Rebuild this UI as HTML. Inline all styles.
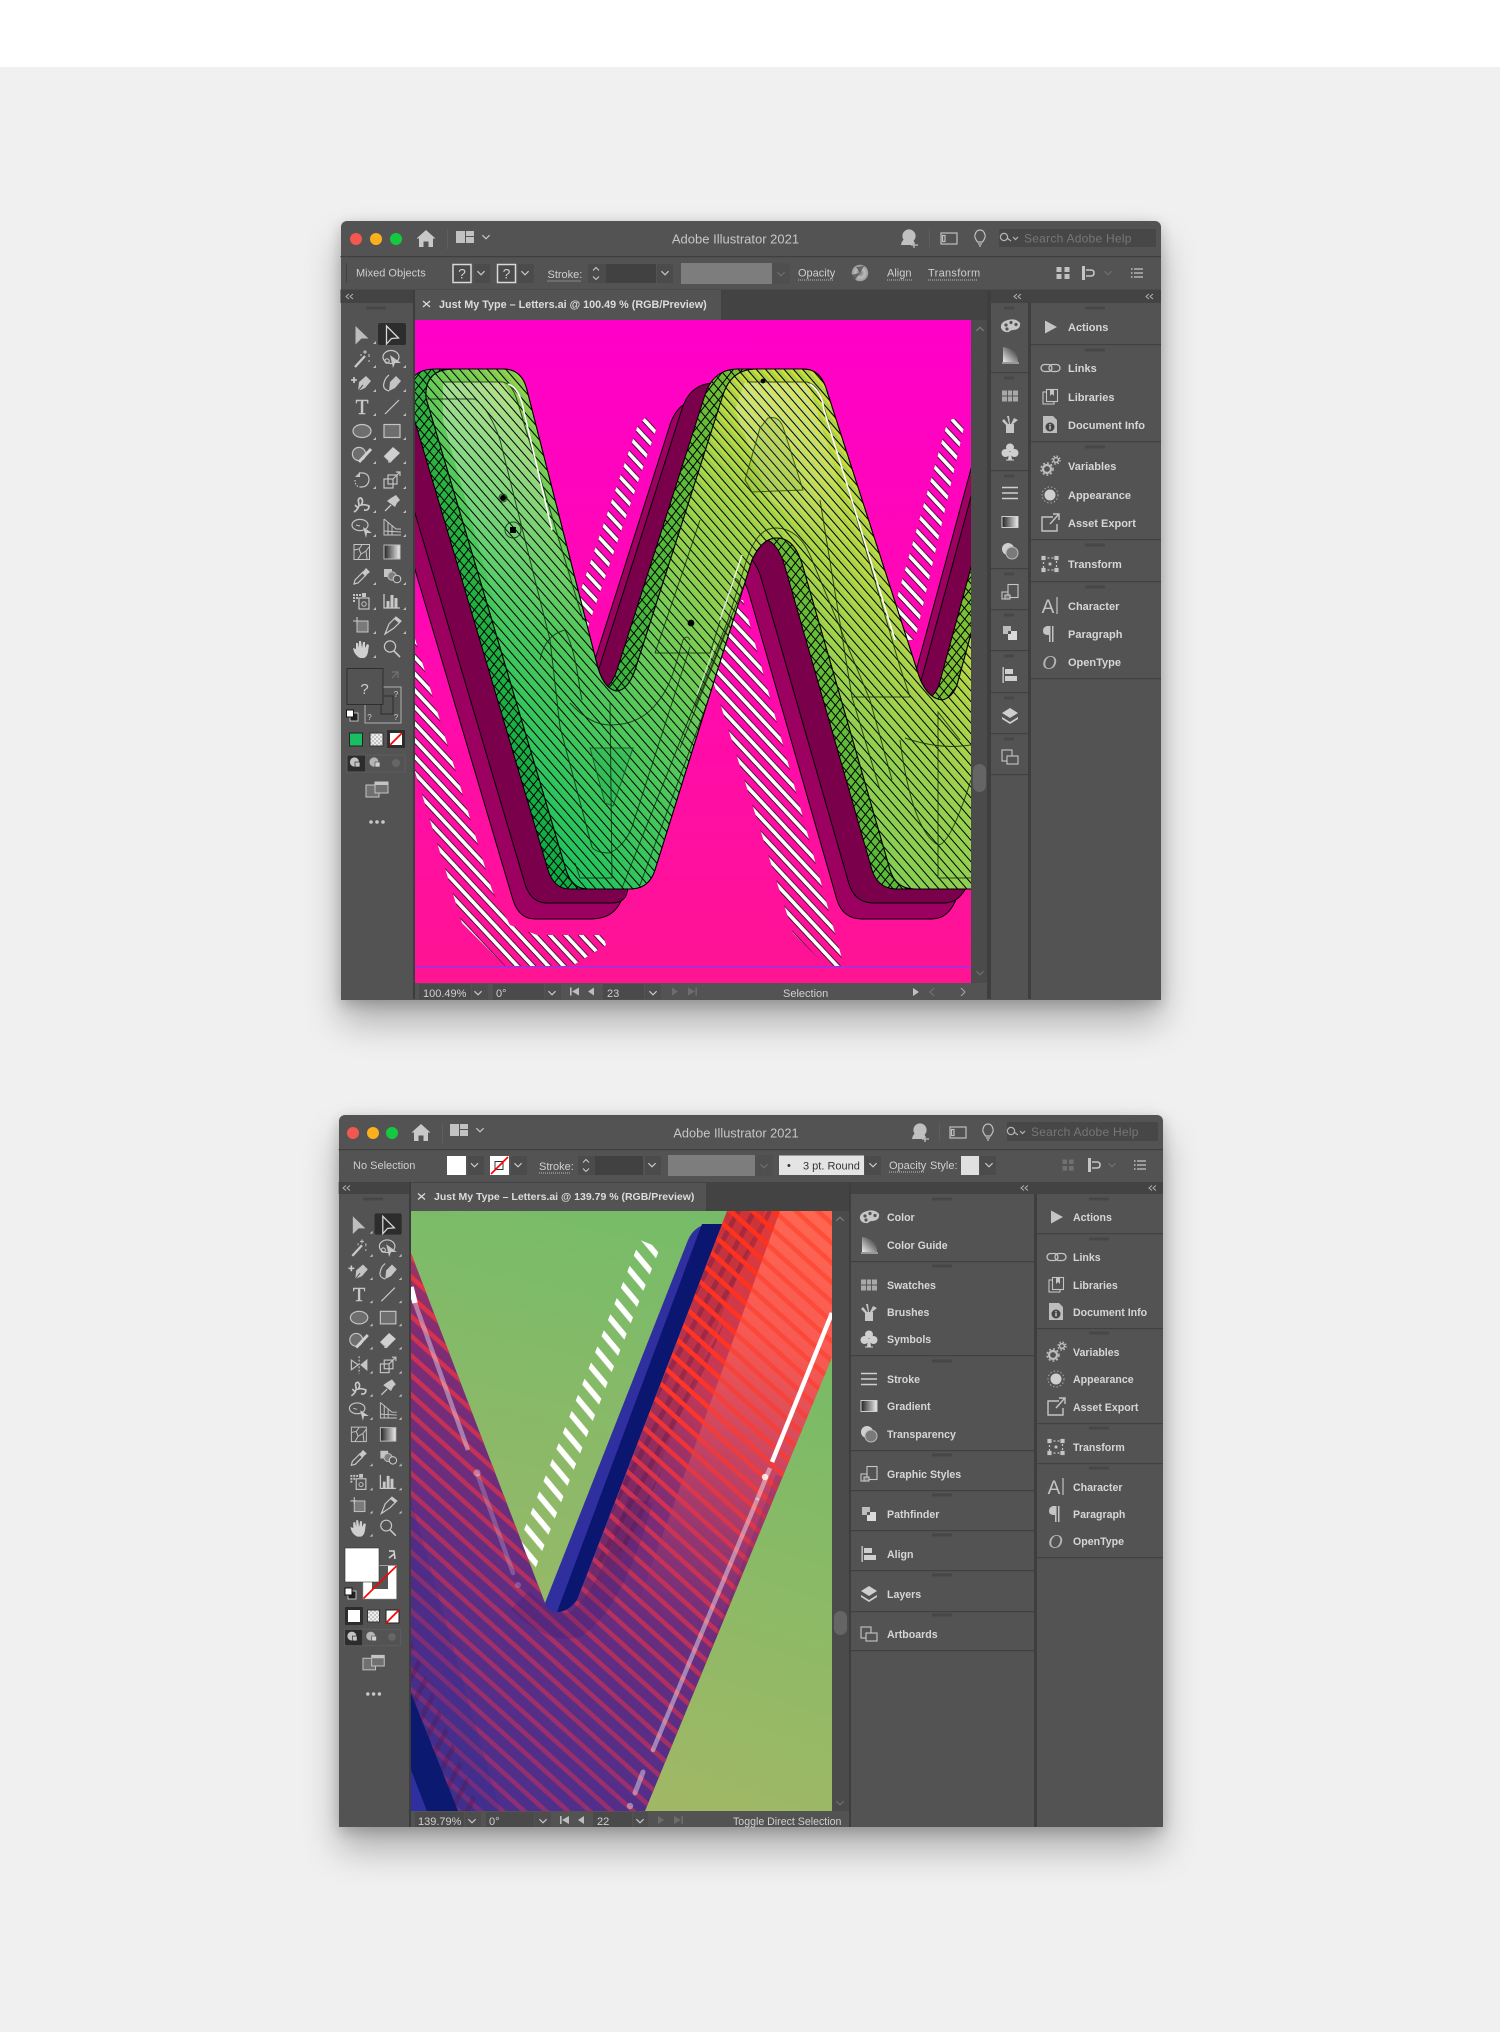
<!DOCTYPE html>
<html lang="en"><head><meta charset="utf-8"><title>Adobe Illustrator 2021</title>
<style>
html,body{margin:0;padding:0;background:#f0f0f0;width:1500px;height:2032px;overflow:hidden}
#top{position:absolute;left:0;top:0;width:1500px;height:67px;background:#fff}
.w{position:absolute;background:#535353;border-radius:6px 6px 0 0;box-shadow:0 22px 36px rgba(0,0,0,.28),0 4px 14px rgba(0,0,0,.2)}
svg{position:absolute;left:0;top:0;filter:blur(.3px)}
text{font-family:"Liberation Sans",sans-serif}
.p{font-size:11px;font-weight:700;fill:#d6d6d6}
.q{font-size:10.6px;font-weight:700;fill:#d6d6d6}
.c{font-size:11px;fill:#cfcfcf}
.tt{font-size:13px;fill:#c6c6c6}
.tb{font-size:10.8px;font-weight:700;fill:#dcdcdc}
.st{font-size:11px;fill:#d0d0d0}
.se{font-size:12px;fill:#767676}
</style></head><body>
<div id="top"></div>
<div class="w" style="left:340.5px;top:221px;width:820.5px;height:778.5px"></div>
<div class="w" style="left:338.7px;top:1115px;width:824.3px;height:711.7px"></div>
<svg width="1500" height="2032" viewBox="0 0 1500 2032" xmlns="http://www.w3.org/2000/svg">
<defs>
<linearGradient id="bg1" x1="0" y1="0" x2="0" y2="1"><stop offset="0" stop-color="#ff00c9"/><stop offset=".55" stop-color="#ff0aae"/><stop offset="1" stop-color="#ff1493"/></linearGradient>
<linearGradient id="lg" gradientUnits="userSpaceOnUse" x1="530" y1="820" x2="870" y2="560"><stop offset="0" stop-color="#1ec25f"/><stop offset=".35" stop-color="#52c85c"/><stop offset=".65" stop-color="#8ace52"/><stop offset="1" stop-color="#a8d24e"/></linearGradient>
<linearGradient id="cg" gradientUnits="userSpaceOnUse" x1="480" y1="800" x2="900" y2="560"><stop offset="0" stop-color="#02ab48"/><stop offset=".45" stop-color="#3fb63c"/><stop offset="1" stop-color="#7cc034"/></linearGradient>
<linearGradient id="hi" x1="0" y1="0" x2="0" y2="1"><stop offset="0" stop-color="#fff" stop-opacity=".38"/><stop offset="1" stop-color="#fff" stop-opacity="0"/></linearGradient>
<linearGradient id="gy" gradientUnits="userSpaceOnUse" x1="700" y1="620" x2="850" y2="420"><stop offset="0" stop-color="#fff" stop-opacity=".05"/><stop offset="1" stop-color="#fff" stop-opacity=".8"/></linearGradient>
<mask id="my" maskUnits="userSpaceOnUse" x="415" y="320" width="560" height="670"><rect x="415" y="320" width="560" height="670" fill="url(#gy)"/></mask>
<pattern id="h" patternUnits="userSpaceOnUse" width="20" height="7" patternTransform="rotate(49)"><rect width="20" height="1" fill="#000"/></pattern>
<pattern id="hc" patternUnits="userSpaceOnUse" width="20" height="7" patternTransform="rotate(-52)"><rect width="20" height="1" fill="#000"/></pattern>
<pattern id="hy" patternUnits="userSpaceOnUse" width="20" height="7" patternTransform="rotate(49)"><rect y="1.8" width="20" height="1.8" fill="#efe21e"/></pattern>
<pattern id="bar1" patternUnits="userSpaceOnUse" y="1.4" width="30" height="11.3" patternTransform="rotate(47)"><rect y="3.4" width="30" height="5.2" fill="#000"/><rect y="4.1" width="30" height="3.8" fill="#fff"/></pattern>
<pattern id="bar2" patternUnits="userSpaceOnUse" y="1.9" width="30" height="11.3" patternTransform="rotate(47)"><rect y="3.4" width="30" height="5.2" fill="#000"/><rect y="4.1" width="30" height="3.8" fill="#fff"/></pattern>
<pattern id="bar3" patternUnits="userSpaceOnUse" y="3.3" width="30" height="11.3" patternTransform="rotate(47)"><rect y="3.4" width="30" height="5.2" fill="#000"/><rect y="4.1" width="30" height="3.8" fill="#fff"/></pattern>
<pattern id="bar4" patternUnits="userSpaceOnUse" y="-4.7" width="30" height="11.3" patternTransform="rotate(47)"><rect y="3.4" width="30" height="5.2" fill="#000"/><rect y="4.1" width="30" height="3.8" fill="#fff"/></pattern>
<linearGradient id="bg2" gradientUnits="userSpaceOnUse" x1="700" y1="1211" x2="560" y2="1811"><stop offset="0" stop-color="#76bc68"/><stop offset=".45" stop-color="#8cb968"/><stop offset="1" stop-color="#a2b866"/></linearGradient>
<linearGradient id="bg2b" gradientUnits="userSpaceOnUse" x1="832" y1="1400" x2="690" y2="1811"><stop offset="0" stop-color="#7bbb66"/><stop offset="1" stop-color="#a0b866"/></linearGradient>
<linearGradient id="m2" gradientUnits="userSpaceOnUse" x1="832" y1="1211" x2="411" y2="1811"><stop offset="0" stop-color="#e83a30"/><stop offset=".3" stop-color="#c23858"/><stop offset=".46" stop-color="#7e2d74"/><stop offset=".7" stop-color="#5c2d84"/><stop offset="1" stop-color="#45308f"/></linearGradient>
<linearGradient id="s2" gradientUnits="userSpaceOnUse" x1="832" y1="1211" x2="411" y2="1811"><stop offset="0" stop-color="#ff3018"/><stop offset=".33" stop-color="#ff3528"/><stop offset=".46" stop-color="#d23250"/><stop offset=".7" stop-color="#a83064"/><stop offset="1" stop-color="#842e7a"/></linearGradient>
<linearGradient id="sal" gradientUnits="userSpaceOnUse" x1="830" y1="1230" x2="660" y2="1620"><stop offset="0" stop-color="#ff6652"/><stop offset=".3" stop-color="#f85a52" stop-opacity=".95"/><stop offset=".6" stop-color="#d04a64" stop-opacity=".5"/><stop offset="1" stop-color="#a04070" stop-opacity="0"/></linearGradient>
<pattern id="sw" patternUnits="userSpaceOnUse" width="30" height="14.6" patternTransform="rotate(42)"><rect y="0" width="30" height="4.6" fill="#fff"/></pattern>
<pattern id="sd" patternUnits="userSpaceOnUse" width="30" height="14" patternTransform="rotate(-62)"><rect width="30" height="5" fill="#5a1240" fill-opacity=".3"/></pattern>
<pattern id="wb" patternUnits="userSpaceOnUse" y="8" width="30" height="15.3" patternTransform="rotate(50)"><rect y="2" width="30" height="5.6" fill="#fff"/></pattern>
<mask id="ms" maskUnits="userSpaceOnUse" x="411" y="1211" width="421" height="600"><rect x="411" y="1211" width="421" height="600" fill="url(#sw)"/></mask>
<linearGradient id="gb" x1="0" y1="0" x2="1" y2="0"><stop offset="0" stop-color="#222"/><stop offset="1" stop-color="#eee"/></linearGradient>
<linearGradient id="gc" x1="0" y1="1" x2="1" y2="0"><stop offset="0" stop-color="#eee"/><stop offset="1" stop-color="#222"/></linearGradient>
<radialGradient id="glb"><stop offset="0" stop-color="#777"/><stop offset=".55" stop-color="#bbb"/><stop offset="1" stop-color="#999"/></radialGradient>
<pattern id="chk" patternUnits="userSpaceOnUse" width="4" height="4"><rect width="4" height="4" fill="#eee"/><rect width="2" height="2" fill="#c4c4c4"/><rect x="2" y="2" width="2" height="2" fill="#c4c4c4"/></pattern>
<path id="L" d="M426 398Q424 369 454 369L503 369Q522 369 527 390L598 668Q605 690 617 691Q628 690 635 670L722 398Q730 369 756 369L803 369Q820 369 826 388L917 670Q925 698 942 700Q952 698 957 685L1043 369L1200 369L1010 867Q1002 889 985 889L915 889Q896 889 890 870L803 567Q795 538 777 538Q762 538 752 560L655 870Q649 889 630 889L588 889Q572 889 566 870Z"/>
<clipPath id="c1"><rect x="415" y="320" width="556" height="663"/></clipPath>
<clipPath id="cl"><use href="#L"/></clipPath>
<clipPath id="c2"><rect x="411" y="1211" width="421" height="600"/></clipPath>
<clipPath id="cm"><path id="M2" d="M411 1253L545 1603L577 1600L727 1211L832 1211L832 1357L645 1811L411 1811Z"/></clipPath>
<g id="chev"><path d="M-3.600-1.800L0 1.800L3.600-1.800" fill="none" stroke="#c8c8c8" stroke-width="1.200"/></g>
<g id="chevd"><path d="M-3.600-1.800L0 1.800L3.600-1.800" fill="none" stroke="#6e6e6e" stroke-width="1.200"/></g>
<g id="chevu"><path d="M-3.600 1.800L0-1.800L3.600 1.800" fill="none" stroke="#7e7e7e" stroke-width="1.200"/></g>
<path id="tri" d="M0 0L3 0L3-3Z" fill="#bdbdbd"/>
<g id="grip"><rect x="-10" y="-1.500" width="20" height="3" fill="#474747"/></g>
<g id="home"><path d="M0-9L9.500-.5L7-.5L7 8L2.500 8L2.500 2.500L-2.500 2.500L-2.500 8L-7 8L-7-.5L-9.500-.5Z" fill="#c8c8c8"/></g>
<g id="wsp"><rect x="-9" y="-6" width="9" height="12" fill="#c2c2c2"/><rect x="1" y="-6" width="8" height="5" fill="#c2c2c2"/><rect x="1" y="0" width="8" height="6" fill="#c2c2c2"/></g>
<g id="user" fill="#c0c0c0"><circle cx="0" cy="-2" r="6.600"/><path d="M-8 7Q-7 1-3 1L3 1Q5 1 5 5L3 7Z"/><path d="M5 4L5 10M2 7L9 7" stroke="#c0c0c0" stroke-width="1.300" fill="none"/></g>
<g id="pane" fill="none" stroke="#c0c0c0" stroke-width="1.200"><rect x="-8" y="-6" width="16" height="11"/><rect x="-6.500" y="-3.500" width="2.500" height="6"/></g>
<g id="bulb" fill="none" stroke="#c0c0c0" stroke-width="1.200"><path d="M-2.500 4Q-6-1-5-3Q-4-8 0-8Q4-8 5-3Q6-1 2.500 4Z"/><path d="M-2 6L2 6M-1 8L1 8"/></g>
<g id="srch" fill="none" stroke="#b5b5b5" stroke-width="1.200"><circle cx="-2" cy="-1" r="3.600"/><path d="M1 0L5 3M7-1L9.500 1.500L12-1"/></g>
<g id="grid" fill="#c0c0c0"><rect x="-6.500" y="-6" width="5" height="5"/><rect x="1.500" y="-6" width="5" height="5"/><rect x="-6.500" y="1" width="5" height="5"/><rect x="1.500" y="1" width="5" height="5"/></g>
<g id="gridd" fill="#717171"><rect x="-5.500" y="-5.500" width="4.600" height="4.600"/><rect x="1" y="-5.500" width="4.600" height="4.600"/><rect x="-5.500" y="1" width="4.600" height="4.600"/><rect x="1" y="1" width="4.600" height="4.600"/></g>
<g id="alignr" fill="none" stroke="#c4c4c4" stroke-width="1.600"><rect x="-7" y="-7" width="3" height="14" fill="#c4c4c4" stroke="none"/><path d="M-3-3L2-3Q5-3 5 0Q5 3 2 3L-3 3"/></g>
<g id="menu" fill="none" stroke="#c4c4c4" stroke-width="1.300"><path d="M-3-4L6-4M-3 0L6 0M-3 4L6 4"/><path d="M-6-4L-4.500-4M-6 0L-4.500 0M-6 4L-4.500 4" stroke-width="1.600"/></g>
<g id="step" fill="none" stroke="#c8c8c8" stroke-width="1.100"><path d="M-3-3L0-6L3-3M-3 3L0 6L3 3"/></g>
<g id="ff" fill="#bdbdbd"><rect x="-5" y="-4" width="1.600" height="8"/><path d="M4-4L4 4L-3 0Z"/></g>
<g id="pv" fill="#bdbdbd"><path d="M3-4L3 4L-3 0Z"/></g>
<g id="nx" fill="#6d6d6d"><path d="M-3-4L-3 4L3 0Z"/></g>
<g id="ll" fill="#6d6d6d"><rect x="3.400" y="-4" width="1.600" height="8"/><path d="M-4-4L-4 4L3 0Z"/></g>
<g id="dbl" fill="none" stroke="#b0b0b0" stroke-width="1"><path d="M-1-2.500L-4 0L-1 2.500M3-2.500L0 0L3 2.500"/></g>
<g id="t1"><path d="M-6.500-9L6.500 3.500L-.5 3.500L-6.500 9.500Z" fill="#bdbdbd"/></g>
<g id="t2"><path d="M-5.500-9L6.500 3L-.5 3.500L-5.500 9Z" fill="none" stroke="#d8d8d8" stroke-width="1.300"/></g>
<g id="t3" fill="none" stroke="#c8c8c8"><path d="M-7 8L3-3" stroke-width="2.400"/><path d="M3-9L3-5M1-7L5-7M7-5L7-2M-1-5L-1-3M7 1L7 3" stroke-width="1"/></g>
<g id="t4"><ellipse cx="-1" cy="-2" rx="8" ry="6.500" fill="none" stroke="#c8c8c8" stroke-width="1.200"/><circle cx="-5" cy="2" r="2.200" fill="none" stroke="#c8c8c8" stroke-width="1.100"/><path d="M-2-4L9 4L3 4L1 9Z" fill="#c4c4c4"/></g>
<g id="t5"><path d="M-4 8L-3-1L4-7L9-2L3 5Z" fill="#c4c4c4"/><path d="M-11-3L-5-3M-8-6L-8 0" stroke="#d0d0d0" stroke-width="1.600"/><path d="M-4 8L1 2" stroke="#535353"/></g>
<g id="t6"><path d="M-3 8L-2-1L4-7L9-2L3 5Z" fill="#c4c4c4"/><path d="M-3 8Q-10 6-8 0Q-7-5-3-8" fill="none" stroke="#c8c8c8" stroke-width="1.200"/></g>
<g id="t7"><text x="0" y="7" text-anchor="middle" font-size="21" fill="#c8c8c8" stroke="#c8c8c8" stroke-width=".4" style="font-family:'Liberation Serif',serif">T</text></g>
<g id="t8"><path d="M-7 7L7-7" stroke="#c8c8c8" stroke-width="1.200"/></g>
<g id="t9"><ellipse rx="9" ry="6.500" fill="#6e6e6e" stroke="#c4c4c4" stroke-width="1.200"/></g>
<g id="t10"><rect x="-8" y="-6.500" width="16" height="13" fill="#6e6e6e" stroke="#c4c4c4" stroke-width="1.200"/></g>
<g id="t11"><circle cx="-3" cy="-1" r="6.600" fill="#6e6e6e" stroke="#c4c4c4" stroke-width="1.200"/><path d="M-3 7L9-6" stroke="#d0d0d0" stroke-width="3"/></g>
<g id="t12"><path d="M-8 1L1-8L8-2L-1 7Z" fill="#d0d0d0"/><path d="M-8 1L-3 6L-1 7L-4 7" fill="none" stroke="#c8c8c8"/></g>
<g id="t13" fill="none" stroke="#c4c4c4" stroke-width="1.200"><path d="M-3-7Q7-8 7 0Q6 7-1 7"/><path d="M-1 7Q-7 7-7 0" stroke-dasharray="1.500 1.500"/><path d="M-7-3L-2-8L-2-3Z" fill="#c4c4c4" stroke="none"/></g>
<g id="t14" fill="none" stroke="#c4c4c4" stroke-width="1.200"><rect x="-8" y="-1" width="9" height="9"/><rect x="-4" y="-5" width="9" height="9"/><path d="M1-1L8-8M4-8L8-8L8-4"/></g>
<g id="t15" fill="none" stroke="#c8c8c8" stroke-width="1.700"><path d="M-8 8Q-3 5-3 0Q-5-6-1-6Q2-3-1 1Q3 0 7 2Q7 7 2 6M-7 1L-4 4"/></g>
<g id="t16"><path d="M-1-6L4-9L8-4L5-1L3 3L-5-3Z" fill="#c8c8c8"/><path d="M-1 1L-7 7" stroke="#c8c8c8" stroke-width="1.300"/></g>
<g id="t17"><ellipse cx="-2" cy="-3" rx="8" ry="5.600" fill="none" stroke="#c4c4c4" stroke-width="1.200"/><path d="M1-1L10 5L5 5L4 10Z" fill="#c8c8c8"/><path d="M-6-3L-2-2" stroke="#c4c4c4"/></g>
<g id="t18" fill="none" stroke="#c4c4c4" stroke-width="1"><path d="M-8-9L-8 7L9 7M-8-9L4 1L9 1M-8 3L9 4M-4-6L-4 7M0-3L0 7"/></g>
<g id="t19" fill="none" stroke="#c4c4c4" stroke-width="1"><rect x="-8" y="-7.500" width="15.500" height="15"/><path d="M-8-2L-3-3L0-7M-3-3L-1 2L4-1L7-5M-1 2L-4 7M4-1L5 7"/></g>
<g id="t20"><rect x="-8" y="-7" width="16" height="14" fill="url(#gb)" stroke="#bbb"/></g>
<g id="t21"><path d="M-8 8L-7 4L1-4L4-1L-4 7Z" fill="none" stroke="#c8c8c8" stroke-width="1.200"/><path d="M0-3L4-8L8-4L3 0Z" fill="#c8c8c8"/></g>
<g id="t22"><rect x="-8" y="-7" width="8" height="8" fill="#c4c4c4"/><circle cx="0" cy="0" r="4.200" fill="#7e7e7e" stroke="#bbb"/><circle cx="5" cy="3" r="3.800" fill="#535353" stroke="#d0d0d0"/></g>
<g id="t23" fill="#c4c4c4"><rect x="-9" y="-7" width="2" height="2"/><rect x="-6" y="-7" width="2" height="2"/><rect x="-3" y="-7" width="2" height="2"/><rect x="-9" y="-4" width="2" height="2"/><rect x="-6" y="-4" width="2" height="2"/><rect x="-9" y="-1" width="2" height="2"/><rect x="0" y="-8" width="4" height="4"/><rect x="-3" y="-3" width="10" height="11" fill="none" stroke="#c4c4c4" stroke-width="1.200"/><circle cx="2" cy="3" r="2.200" fill="none" stroke="#c4c4c4"/></g>
<g id="t24" fill="none" stroke="#c8c8c8" stroke-width="1.300"><path d="M-8-7L-8 7L8 7"/><path d="M-4 7L-4 0M0 7L0-6M4 7L4-3" stroke-width="3"/></g>
<g id="t25"><rect x="-5" y="-4" width="11" height="11" fill="#7a7a7a" stroke="#c4c4c4"/><path d="M-9-4L-2-4M-5-8L-5-1" stroke="#c8c8c8" stroke-width="1.100"/></g>
<g id="t26"><path d="M-7 9L-3-1L4-8L9-4L2 3Z" fill="none" stroke="#c8c8c8" stroke-width="1.200"/><path d="M2-6L7-2L9-4L4-8Z" fill="#c8c8c8"/></g>
<g id="t27"><path d="M-2 9Q-8 6-9-1L-6 0L-6-6L-4-6L-3-1L-3-8L-1-8L0-1L1-7L3-7L3-1L5-5L7-4L6 3Q5 8 2 9Z" fill="#cfcfcf"/></g>
<g id="t28" fill="none" stroke="#c8c8c8" stroke-width="1.200"><circle cx="-2" cy="-2.500" r="5.600"/><path d="M2 2L8 8" stroke-width="1.600"/></g>
<g id="t29" fill="none" stroke="#c4c4c4" stroke-width="1.200"><path d="M-8-5L-8 5L-1 0Z"/><path d="M0-9L0 9" stroke-dasharray="2 1.500"/><path d="M8-5L8 5L2 0Z" fill="#c4c4c4"/></g>
<g id="ti"><use href="#t1" x="362" y="335"/><rect x="378" y="323" width="28" height="22" rx="2" fill="#2d2d2d"/><use href="#t2" x="392" y="335"/>
<use href="#t3" x="362" y="359"/><use href="#t4" x="392" y="359"/><use href="#t5" x="362" y="383"/><use href="#t6" x="392" y="383"/><use href="#t7" x="362" y="407"/><use href="#t8" x="392" y="407"/><use href="#t9" x="362" y="431"/><use href="#t10" x="392" y="431"/><use href="#t11" x="362" y="455"/><use href="#t12" x="392" y="455"/><use href="#t14" x="392" y="480"/><use href="#t15" x="362" y="504"/><use href="#t16" x="392" y="504"/><use href="#t17" x="362" y="528"/><use href="#t18" x="392" y="528"/><use href="#t19" x="362" y="552"/><use href="#t20" x="392" y="552"/><use href="#t21" x="362" y="576"/><use href="#t22" x="392" y="576"/><use href="#t23" x="362" y="601"/><use href="#t24" x="392" y="601"/><use href="#t25" x="362" y="625"/><use href="#t26" x="392" y="625"/><use href="#t27" x="362" y="649"/><use href="#t28" x="392" y="649"/>
<use href="#tri" x="373" y="344"/><use href="#tri" x="373" y="368"/><use href="#tri" x="403" y="368"/><use href="#tri" x="373" y="392"/><use href="#tri" x="403" y="392"/><use href="#tri" x="373" y="416"/><use href="#tri" x="403" y="416"/><use href="#tri" x="373" y="440"/><use href="#tri" x="403" y="440"/><use href="#tri" x="373" y="464"/><use href="#tri" x="403" y="464"/><use href="#tri" x="373" y="489"/><use href="#tri" x="403" y="489"/><use href="#tri" x="373" y="513"/><use href="#tri" x="403" y="513"/><use href="#tri" x="373" y="537"/><use href="#tri" x="403" y="537"/><use href="#tri" x="373" y="585"/><use href="#tri" x="403" y="585"/><use href="#tri" x="373" y="610"/><use href="#tri" x="403" y="610"/><use href="#tri" x="373" y="634"/><use href="#tri" x="403" y="634"/><use href="#tri" x="373" y="658"/></g>
<g id="modes"><rect x="347" y="755" width="18" height="17" fill="#2d2d2d"/><rect x="347" y="755" width="58" height="17" fill="none" stroke="#5e5e5e"/><circle cx="354.500" cy="762" r="4.600" fill="#c4c4c4"/><rect x="355" y="762" width="5" height="5" fill="#c4c4c4" stroke="#2d2d2d" stroke-width=".7"/><circle cx="374" cy="762" r="4.600" fill="#b5b5b5"/><rect x="375" y="762" width="5" height="5" fill="#d0d0d0" stroke="#535353" stroke-width=".7"/><circle cx="396" cy="763" r="4" fill="#666"/>
<g fill="#707070" stroke="#c4c4c4"><rect x="366" y="785" width="13" height="12"/><rect x="375" y="782" width="13" height="11"/></g><rect x="375" y="782" width="13" height="3" fill="#c4c4c4"/>
<circle cx="371" cy="822" r="1.800" fill="#c8c8c8"/><circle cx="377" cy="822" r="1.800" fill="#c8c8c8"/><circle cx="383" cy="822" r="1.800" fill="#c8c8c8"/></g>
<g id="pal" fill="#c6c6c6"><path d="M-9 2Q-10-4-2-6Q6-8 10-3Q11 3 4 4Q0 4-1 6Q-7 7-9 2Z"/><circle cx="-4" cy="-1" r="1.600" fill="#535353"/><circle cx="1" cy="-3.500" r="1.600" fill="#535353"/><circle cx="6" cy="-1.500" r="1.600" fill="#535353"/><circle cx="-3" cy="3" r="1.600" fill="#535353"/></g>
<g id="cgd"><path d="M-7-8L-7 7L8 7Q8-6-7-8Z" fill="url(#gc)"/><path d="M-8 8L9 8" stroke="#ddd"/></g>
<g id="swt" fill="#a8a8a8"><rect x="-8" y="-5.500" width="16" height="11"/><path d="M-8 0L8 0M-2.500-5.500L-2.500 5.500M2.500-5.500L2.500 5.500" stroke="#535353" stroke-width=".9"/></g>
<g id="brs" fill="#c6c6c6"><rect x="-4" y="0" width="8" height="9"/><path d="M-1 0L-3-8L-1-8L0 0M1 0L4-6L8-4L3 0M-2 0L-6-5L-8-3L-4 1"/></g>
<g id="clb" fill="#cfcfcf"><circle cy="-4.500" r="4"/><circle cx="-4.500" cy="1" r="4"/><circle cx="4.500" cy="1" r="4"/><path d="M-1 0L1 0L2 8L-2 8Z"/><path d="M-4 8L4 8" stroke="#cfcfcf" stroke-width="1"/></g>
<g id="stk" stroke="#cfcfcf" stroke-width="1.400"><path d="M-8-5.500L8-5.500M-8 0L8 0M-8 5.500L8 5.500"/></g>
<g id="grd"><rect x="-8" y="-5.500" width="16" height="11" fill="url(#gb)" stroke="#cfcfcf"/></g>
<g id="trn"><circle cx="-2" cy="-2" r="6" fill="#cfcfcf"/><circle cx="2" cy="2" r="6" fill="#7a7a7a" stroke="#bbb"/></g>
<g id="gst" fill="none" stroke="#c6c6c6" stroke-width="1.100"><rect x="-2" y="-7.500" width="10" height="13"/><rect x="-8" y="0" width="6" height="7" fill="#535353"/><rect x="-5" y="3" width="5" height="4" fill="#777"/></g>
<g id="pth"><rect x="-7" y="-7" width="8" height="8" fill="#bcbcbc"/><rect x="-2" y="-2" width="9" height="9" fill="#dadada"/><rect x="-2" y="-2" width="3" height="3" fill="#535353"/></g>
<g id="alg" fill="#cfcfcf"><rect x="-7.500" y="-8" width="1.300" height="16"/><rect x="-5" y="-6" width="8" height="5"/><rect x="-5" y="1" width="12" height="5"/></g>
<g id="lyr" fill="#cfcfcf"><path d="M0-8L8-3L0 2L-8-3Z"/><path d="M-8 1L0 6L8 1L8 3L0 8L-8 3Z"/></g>
<g id="abd" fill="none" stroke="#c6c6c6" stroke-width="1.100"><rect x="-8" y="-7" width="10" height="11"/><rect x="-3" y="-1" width="11" height="8" fill="#535353"/></g>
<g id="act"><path d="M-6-6.500L6 0L-6 6.500Z" fill="#c4c4c4"/></g>
<g id="lnk" fill="none" stroke="#c4c4c4" stroke-width="1.300"><rect x="-9" y="-3.500" width="11" height="7" rx="3.500"/><rect x="-1" y="-3.500" width="11" height="7" rx="3.500"/></g>
<g id="lib" fill="none" stroke="#c4c4c4" stroke-width="1.100"><rect x="-7" y="-5" width="11" height="12"/><rect x="-3.500" y="-7.500" width="11" height="12" fill="#535353"/><path d="M0-7L0-1L2-3L4-1L4-7Z" fill="#c4c4c4" stroke="none"/></g>
<g id="doc"><path d="M-7-9L3-9L7-5L7 8L-7 8Z" fill="#bcbcbc"/><circle cy="2" r="4.500" fill="#444"/><rect x="-.700" y="1" width="1.400" height="3.500" fill="#ccc"/><rect x="-.700" y="-1" width="1.400" height="1.400" fill="#ccc"/></g>
<g id="var" fill="none" stroke="#bdbdbd"><circle cx="-3" cy="3" r="4" stroke-width="2.200"/><circle cx="-3" cy="3" r="6" stroke-width="1.500" stroke-dasharray="2 2"/><circle cx="6" cy="-6" r="2.400" stroke-width="1.500"/><circle cx="6" cy="-6" r="4" stroke-width="1.300" stroke-dasharray="1.600 1.600"/></g>
<g id="apr"><circle r="5.500" fill="#cfcfcf"/><circle r="8" fill="none" stroke="#a8a8a8" stroke-dasharray="1.500 2"/></g>
<g id="exp" fill="none" stroke="#c4c4c4" stroke-width="1.400"><path d="M3-6L-8-6L-8 8L7 8L7 1"/><path d="M0 1L8-8M3-9L9-9L9-3"/></g>
<g id="trf" fill="none" stroke="#c4c4c4" stroke-width="1.200"><rect x="-6.500" y="-6" width="13" height="12" stroke-dasharray="2 2"/><rect x="-8" y="-7.500" width="3" height="3" fill="#c4c4c4"/><rect x="5" y="-7.500" width="3" height="3" fill="#c4c4c4"/><rect x="-8" y="4.500" width="3" height="3" fill="#c4c4c4"/><rect x="5" y="4.500" width="3" height="3" fill="#c4c4c4"/><rect x="-.800" y="-.800" width="1.600" height="1.600" fill="#c4c4c4"/></g>
<g id="chr"><text x="-2" y="7" text-anchor="middle" font-size="19" fill="#c4c4c4">A</text><path d="M7-9L7 8" stroke="#c4c4c4" stroke-width="1.200"/></g>
<g id="prg"><path d="M0-8L-3-8Q-7-7-7-3Q-7 1-2 1L-1 1L-1 8L.5 8L.5-8ZM2-8L2 8L3.500 8L3.500-8Z" fill="#c4c4c4"/></g>
<g id="opt"><text x="-.5" y="7" text-anchor="middle" font-size="20" font-style="italic" fill="#b5b5b5" style="font-family:'Liberation Serif',serif">O</text></g>
</defs>

<!-- ======== WINDOW 1 ======== -->
<g id="w1">
<rect x="340.500" y="256" width="820.500" height="1.200" fill="#3f3f3f"/>
<rect x="340.500" y="289.500" width="820.500" height="13.500" fill="#434343"/>
<rect x="413" y="290" width="578" height="30" fill="#434343"/>
<rect x="413" y="290" width="2" height="709" fill="#3d3d3d"/>
<rect x="415" y="290" width="306" height="30" fill="#535353"/>
<rect x="971" y="320" width="16" height="663" fill="#4b4b4b"/>
<rect x="987" y="290" width="4" height="709" fill="#3e3e3e"/>
<rect x="1028" y="303" width="3" height="696" fill="#3e3e3e"/>
<rect x="991" y="303" width="37" height="696" fill="#535353"/>
<circle cx="356" cy="239" r="6" fill="#f2584f"/><circle cx="376" cy="239" r="6" fill="#fbb01c"/><circle cx="396" cy="239" r="6" fill="#14c93f"/>
<use href="#home" x="426" y="239"/><rect x="447" y="229" width="1" height="20" fill="#5e5e5e"/><use href="#wsp" x="465" y="237"/><use href="#chev" x="486" y="237"/>
<text class="tt" x="735.500" y="243.500" text-anchor="middle">Adobe Illustrator 2021</text>
<use href="#user" x="909" y="238"/><rect x="929" y="229" width="1" height="18" fill="#5e5e5e"/><use href="#pane" x="949" y="239"/><use href="#bulb" x="980" y="238"/>
<rect x="999" y="229" width="157" height="18" fill="#474747"/><use href="#srch" x="1006" y="238"/><text class="se" x="1024" y="242.500" style="letter-spacing:.25px">Search Adobe Help</text>
<rect x="346" y="263" width="1" height="20" fill="#414141"/>
<text class="c" x="356" y="276.500">Mixed Objects</text>
<rect x="453" y="264.500" width="18" height="18" fill="#4a4a4a" stroke="#d8d8d8" stroke-width="1.500"/><text x="462" y="278.500" text-anchor="middle" font-size="14" fill="#d0d0d0">?</text>
<rect x="474" y="264" width="16" height="19" fill="#4b4b4b"/><use href="#chev" x="481" y="273"/>
<rect x="497.500" y="264.500" width="18" height="18" fill="#4a4a4a" stroke="#d8d8d8" stroke-width="1.500"/><text x="506.500" y="278.500" text-anchor="middle" font-size="14" fill="#d0d0d0">?</text>
<rect x="518" y="264" width="16" height="19" fill="#4b4b4b"/><use href="#chev" x="525" y="273"/>
<text class="c" x="547.500" y="278">Stroke:</text><path d="M547.500 281L581 281" stroke="#bbb" stroke-dasharray="1 1"/>
<rect x="588" y="264" width="18" height="19" fill="#4b4b4b"/><use href="#step" x="596" y="273.500"/><rect x="606" y="264" width="50" height="19" fill="#414141"/><rect x="657" y="264" width="16" height="19" fill="#4b4b4b"/><use href="#chev" x="665" y="273"/>
<rect x="681" y="263" width="91" height="21" fill="#7d7d7d"/><rect x="772" y="263" width="18" height="21" fill="#4f4f4f"/><use href="#chevd" x="781" y="274"/>
<text class="c" x="798" y="276.500">Opacity</text><path d="M798 280L834 280" stroke="#bbb" stroke-dasharray="1 1"/>
<circle cx="860" cy="273" r="8.300" fill="url(#glb)"/><path d="M860 273L856 267L864 266ZM860 273L855 280L851 275Z" fill="#444" opacity=".7"/>
<text class="c" x="887" y="276.500">Align</text><path d="M887 280L913 280" stroke="#bbb" stroke-dasharray="1 1"/>
<text class="c" x="928" y="276.500" style="letter-spacing:.3px">Transform</text><path d="M928 280L978 280" stroke="#bbb" stroke-dasharray="1 1"/>
<use href="#grid" x="1063" y="273"/><use href="#alignr" x="1089" y="273"/><use href="#chevd" x="1108" y="273"/><use href="#menu" x="1137" y="273"/>
<use href="#dbl" x="350" y="296.500"/><use href="#dbl" x="1018" y="296.500"/><use href="#dbl" x="1150" y="296.500"/>
<path d="M423 301L430 307M430 301L423 307" stroke="#ddd" stroke-width="1.200"/>
<text class="tb" x="439" y="308">Just My Type – Letters.ai @ 100.49 % (RGB/Preview)</text>
<use href="#grip" x="376" y="308"/>
<use href="#ti"/><use href="#t13" x="362" y="480"/>
<g><path d="M365 687L401 687L401 723L365 723Z" fill="none" stroke="#b0b0b0"/><rect x="381" y="696" width="12" height="18" fill="none" stroke="#2c2c2c"/><rect x="347" y="668.500" width="36" height="36" fill="#535353" stroke="#2f2f2f"/><text x="364.500" y="694" text-anchor="middle" font-size="15" fill="#cccccc">?</text><text x="396" y="697" text-anchor="middle" font-size="8" fill="#ccc">?</text><text x="369.500" y="720" text-anchor="middle" font-size="8" fill="#ccc">?</text><text x="396" y="720" text-anchor="middle" font-size="8" fill="#ccc">?</text>
<path d="M392 672L398 672L398 678M398 672L392 678" fill="none" stroke="#6f6f6f" stroke-width="1.400"/>
<rect x="350" y="713" width="8" height="8" fill="#222" stroke="#ddd" stroke-width=".8"/><rect x="346.500" y="710" width="7" height="7" fill="#fff" stroke="#111"/></g>
<rect x="349.500" y="733" width="13" height="13" fill="#1bbd63" stroke="#222"/><rect x="370" y="733" width="13" height="13" fill="url(#chk)" stroke="#333"/>
<rect x="387" y="730" width="18" height="18" rx="1" fill="#2d2d2d"/><rect x="390" y="733" width="12" height="12" fill="#fff"/><path d="M390 745L402 733" stroke="#f00" stroke-width="1.800"/>
<use href="#modes"/>
<rect x="415" y="983" width="572" height="16.500" fill="#535353"/>
<rect x="419" y="984" width="52" height="15.500" fill="#4a4a4a"/><rect x="472" y="984" width="16" height="15.500" fill="#4d4d4d"/><rect x="493" y="984" width="51" height="15.500" fill="#4a4a4a"/><rect x="545" y="984" width="16" height="15.500" fill="#4d4d4d"/><rect x="603" y="984" width="41" height="15.500" fill="#4a4a4a"/><rect x="645" y="984" width="16" height="15.500" fill="#4d4d4d"/>
<text class="st" x="423" y="997">100.49%</text><use href="#chev" x="478" y="993"/><text class="st" x="496" y="997">0°</text><use href="#chev" x="552" y="993"/>
<use href="#ff" x="575" y="991.500"/><use href="#pv" x="591" y="991.500"/><text class="st" x="607" y="997">23</text><use href="#chev" x="653" y="993"/><use href="#nx" x="675" y="991.500"/><use href="#ll" x="692" y="991.500"/>
<text class="st" x="783" y="997">Selection</text>
<path d="M913 988L913 996L919 992Z" fill="#c0c0c0"/><path d="M934 988L930 992L934 996" fill="none" stroke="#777"/><path d="M961 988L965 992L961 996" fill="none" stroke="#aaa"/>
<use href="#chevu" x="980" y="329"/><use href="#chevd" x="980" y="973"/><rect x="973" y="764" width="13" height="28" rx="6.500" fill="#656565"/>
<g fill="#414141"><rect x="991" y="372" width="37" height="1.200"/><rect x="991" y="470" width="37" height="1.200"/><rect x="991" y="568" width="37" height="1.200"/><rect x="991" y="609" width="37" height="1.200"/><rect x="991" y="650" width="37" height="1.200"/><rect x="991" y="692" width="37" height="1.200"/><rect x="991" y="733" width="37" height="1.200"/><rect x="991" y="774" width="37" height="1.200"/>
<rect x="1031" y="344" width="130" height="1.200"/><rect x="1031" y="441" width="130" height="1.200"/><rect x="1031" y="539" width="130" height="1.200"/><rect x="1031" y="581" width="130" height="1.200"/><rect x="1031" y="678" width="130" height="1.200"/></g>
<g transform="translate(1009 0) scale(.5 1)"><use href="#grip" y="308"/><use href="#grip" y="378"/><use href="#grip" y="476"/><use href="#grip" y="574"/><use href="#grip" y="615"/><use href="#grip" y="656"/><use href="#grip" y="698"/><use href="#grip" y="739"/></g>
<g><use href="#grip" x="1095" y="308"/><use href="#grip" x="1095" y="350"/><use href="#grip" x="1095" y="447"/><use href="#grip" x="1095" y="545"/><use href="#grip" x="1095" y="587"/></g>
<use href="#pal" x="1010" y="326"/><use href="#cgd" x="1010" y="355"/><use href="#swt" x="1010" y="396"/><use href="#brs" x="1010" y="424"/><use href="#clb" x="1010" y="452"/><use href="#stk" x="1010" y="493"/><use href="#grd" x="1010" y="522"/><use href="#trn" x="1010" y="551"/><use href="#gst" x="1010" y="592"/><use href="#pth" x="1010" y="633"/><use href="#alg" x="1010" y="675"/><use href="#lyr" x="1010" y="716"/><use href="#abd" x="1010" y="757"/>
<use href="#act" x="1051" y="327"/><use href="#lnk" x="1050" y="368"/><use href="#lib" x="1050" y="397"/><use href="#doc" x="1050" y="425"/><use href="#var" x="1050" y="466"/><use href="#apr" x="1050" y="495"/><use href="#exp" x="1050" y="523"/><use href="#trf" x="1050" y="564"/><use href="#chr" x="1050" y="606"/><use href="#prg" x="1050" y="634"/><use href="#opt" x="1050" y="662"/>
<text class="p" x="1068" y="331">Actions</text><text class="p" x="1068" y="372">Links</text><text class="p" x="1068" y="401">Libraries</text><text class="p" x="1068" y="429">Document Info</text><text class="p" x="1068" y="470">Variables</text><text class="p" x="1068" y="499">Appearance</text><text class="p" x="1068" y="527">Asset Export</text><text class="p" x="1068" y="568">Transform</text><text class="p" x="1068" y="610">Character</text><text class="p" x="1068" y="638">Paragraph</text><text class="p" x="1068" y="666">OpenType</text>
<g clip-path="url(#c1)">
<rect x="415" y="320" width="556" height="663" fill="url(#bg1)"/>
<path d="M646 417L652 417L658 424L580 650L560 650L638 425Z" fill="url(#bar1)"/>
<path d="M952 419L958 419L964 427L915 640L885 640L946 427Z" fill="url(#bar2)"/>
<path d="M374 640L400 590L492 890L510 925L537 935L603 935L606 945L572 966L505 966L462 923Z" fill="url(#bar3)"/>
<path d="M700 640L730 600L743 600L844 966L826 966L793 933Z" fill="url(#bar4)"/>
<use href="#L" transform="translate(-53 30)" fill="#9c0060" stroke="#000"/>
<path d="M555 880L626 880Q623 903 613 912Q605 919 590 919L555 919Z" fill="#9c0060"/><path d="M626 885Q623 903 613 912Q605 919 590 919L550 919" fill="none" stroke="#000"/>
<use href="#L" transform="translate(-41 14)" fill="#7a004c" stroke="#000"/>
<path d="M555 880L628 880Q628 903 612 903L555 903Z" fill="#7a004c"/><path d="M628 885Q628 903 612 903L555 903" fill="none" stroke="#000"/>
<use href="#L" transform="translate(-18 0)" fill="url(#cg)" stroke="#000"/>
<use href="#L" transform="translate(-18 0)" fill="url(#h)"/>
<use href="#L" transform="translate(-18 0)" fill="url(#hc)"/>
<use href="#L" fill="url(#lg)" stroke="#000" stroke-width="1"/>
<g clip-path="url(#cl)">
<path d="M443 382L503 382L520 410L580 620L505 640L443 420Z" fill="url(#hi)"/>
<path d="M745 382L808 382L835 470L850 560L770 500L735 410Z" fill="url(#hi)"/>
<rect x="415" y="320" width="556" height="663" fill="url(#hy)" mask="url(#my)"/>
<rect x="415" y="320" width="556" height="663" fill="url(#h)"/>
<path d="M590 748L633 748L613 806L605 803Z" fill="#0a9a4c" fill-opacity=".2" stroke="#1a4a24" stroke-opacity=".8"/>
<path d="M768 418Q780 415 784 430L803 490L752 492L745 480L760 428Z" fill="#5e8c30" fill-opacity=".12" stroke="#24400c" stroke-opacity=".8"/>
<g fill="none" stroke="#10240c" stroke-width="1" stroke-opacity=".8">
<path d="M415 399L475 399Q490 410 500 440L550 640L560 727L592 847Q596 853 610 853Q625 845 632 827L690 647"/>
<path d="M443 382L503 382Q512 384 517 400L583 620"/>
<path d="M570 703Q590 725 610 725Q640 725 657 703Q668 690 675 667L683 640Q687 634 690 640"/>
<path d="M610 702L612 878L580 878L575 863"/>
<path d="M655 653L710 653L733 580Q737 574 742 590L695 707"/>
<path d="M655 653L685 565L700 520"/>
<path d="M622 888L728 620L745 565Q756 528 775 528Q800 528 812 560L870 700L892 780"/>
<path d="M640 885L736 625"/>
<path d="M732 617L680 748"/>
<path d="M747 382L807 382Q818 385 822 400L900 667"/>
<path d="M820 500L852 697L910 697L900 667"/>
<path d="M852 697L880 790"/>
<path d="M960 740L938 712L938 878L971 878"/>
<path d="M905 738Q940 750 971 745"/>
<path d="M900 740Q912 830 938 845Q950 845 971 780"/>
<path d="M540 660Q545 635 565 630Q575 650 580 690L582 700"/>
<circle cx="503" cy="498" r="4"/><circle cx="513" cy="530" r="8"/>
</g>
<path d="M508 384Q520 388 524 412L552 530" fill="none" stroke="#fff" stroke-width="1.600"/>
<path d="M810 384Q822 392 824 410L895 640" fill="none" stroke="#fff" stroke-width="1.600"/>
<path d="M742 555L720 620" fill="none" stroke="#fff" stroke-width="1.400" opacity=".85"/>
<path d="M697 695L715 645" fill="none" stroke="#cfe9c0" stroke-width="1"/>
<circle cx="503" cy="498" r="3" fill="#000"/><rect x="510" y="527" width="6" height="6" fill="#000"/>
<circle cx="691" cy="623" r="3.400" fill="#000"/><circle cx="763" cy="381" r="2.400" fill="#000"/>
</g>
<use href="#L" fill="none" stroke="#000" stroke-width="1"/>
<rect x="415" y="966" width="556" height="1.200" fill="#7b3cff"/>
</g>
</g>

<!-- ======== WINDOW 2 ======== -->
<g id="w2">
<rect x="338.700" y="1149" width="824.300" height="1.200" fill="#3f3f3f"/>
<rect x="338.700" y="1182" width="824.300" height="12" fill="#434343"/>
<rect x="409" y="1182" width="442" height="29" fill="#434343"/>
<rect x="409" y="1182" width="2" height="645" fill="#3d3d3d"/>
<rect x="411" y="1183" width="295" height="28" fill="#535353"/>
<rect x="832" y="1211" width="17" height="600" fill="#4b4b4b"/>
<rect x="849" y="1182" width="2" height="645" fill="#3e3e3e"/>
<rect x="1034" y="1194" width="3" height="633" fill="#3e3e3e"/>
<circle cx="353" cy="1133" r="6" fill="#f2584f"/><circle cx="373" cy="1133" r="6" fill="#fbb01c"/><circle cx="392" cy="1133" r="6" fill="#14c93f"/>
<use href="#home" x="421" y="1133"/><rect x="442" y="1123" width="1" height="20" fill="#5e5e5e"/><use href="#wsp" x="459" y="1130"/><use href="#chev" x="480" y="1130"/>
<text class="tt" x="736" y="1137.500" text-anchor="middle" style="font-size:12.800px">Adobe Illustrator 2021</text>
<use href="#user" x="920" y="1132"/><rect x="939" y="1123" width="1" height="18" fill="#5e5e5e"/><use href="#pane" x="958" y="1133"/><use href="#bulb" x="988" y="1132"/>
<rect x="1007" y="1122" width="151" height="19" fill="#474747"/><use href="#srch" x="1013" y="1132"/><text class="se" x="1031" y="1136" style="letter-spacing:.25px">Search Adobe Help</text>
<text class="c" x="353" y="1169">No Selection</text>
<rect x="447" y="1156" width="19" height="19" fill="#fff"/><rect x="468" y="1156" width="16" height="19" fill="#4b4b4b"/><use href="#chev" x="474.500" y="1165"/>
<rect x="490" y="1156" width="19" height="19" fill="#fff"/><rect x="495" y="1161.500" width="8" height="8" fill="none" stroke="#333"/><path d="M491 1174L508 1157" stroke="#f00" stroke-width="1.600"/><rect x="511" y="1156" width="16" height="19" fill="#4b4b4b"/><use href="#chev" x="518" y="1165"/>
<text class="c" x="539" y="1170">Stroke:</text><path d="M539 1173L571 1173" stroke="#bbb" stroke-dasharray="1 1"/>
<rect x="578" y="1156" width="17" height="19" fill="#4b4b4b"/><use href="#step" x="586" y="1165.500"/><rect x="595" y="1156" width="48" height="19" fill="#414141"/><rect x="645" y="1156" width="16" height="19" fill="#4b4b4b"/><use href="#chev" x="652" y="1165"/>
<rect x="668" y="1155" width="87" height="21" fill="#7d7d7d"/><rect x="755" y="1155" width="18" height="21" fill="#4f4f4f"/><use href="#chevd" x="764" y="1166"/>
<rect x="779" y="1155.500" width="85" height="19.500" fill="#e4e4e4"/><text x="787" y="1169" font-size="11" fill="#333">•</text><text x="803" y="1169.500" font-size="11" fill="#333">3 pt. Round</text><rect x="865" y="1156" width="16" height="19" fill="#4b4b4b"/><use href="#chev" x="873" y="1165"/>
<text class="c" x="889" y="1169">Opacity</text><path d="M889 1172L925 1172" stroke="#bbb" stroke-dasharray="1 1"/>
<text class="c" x="930" y="1169">Style:</text><rect x="961" y="1156" width="18" height="19" fill="#e0e0e0"/><rect x="980" y="1156" width="16" height="19" fill="#4b4b4b"/><use href="#chev" x="989" y="1165"/>
<use href="#gridd" x="1068" y="1165"/><use href="#alignr" x="1095" y="1165"/><use href="#chevd" x="1112" y="1165"/><use href="#menu" x="1140" y="1165"/>
<use href="#dbl" x="347" y="1188"/><use href="#dbl" x="1025" y="1188"/><use href="#dbl" x="1153" y="1188"/>
<path d="M418 1193.500L425 1199.500M425 1193.500L418 1199.500" stroke="#ddd" stroke-width="1.200"/>
<text class="tb" x="434" y="1200" style="font-size:10.500px">Just My Type – Letters.ai @ 139.79 % (RGB/Preview)</text>
<use href="#grip" x="373" y="1199"/>
<g transform="matrix(.967 0 0 .965 9.050 901.700)"><use href="#ti"/><use href="#t29" x="362" y="480"/></g>
<rect x="363" y="1565.500" width="33.500" height="33.500" fill="#fff" stroke="#999" stroke-width=".5"/><rect x="372" y="1566" width="16" height="23" fill="#555"/><rect x="345" y="1548" width="34" height="34" fill="#fff" stroke="#333" stroke-width=".6"/><path d="M363.500 1598.500L396.500 1566" stroke="#f00" stroke-width="1.600"/>
<path d="M389 1558L394 1554M389 1551L394 1551L395 1559" fill="none" stroke="#d4d4d4" stroke-width="1.500"/>
<rect x="348" y="1591" width="8" height="8" fill="#222" stroke="#ddd" stroke-width=".8"/><rect x="345" y="1588" width="7" height="7" fill="#fff" stroke="#111"/>
<rect x="345" y="1607" width="18" height="18" rx="1" fill="#2d2d2d"/><rect x="348" y="1610" width="12" height="12" fill="#fff"/><rect x="367.500" y="1610" width="12" height="12" fill="url(#chk)" stroke="#333"/>
<rect x="386" y="1610" width="13" height="13" fill="#fff" stroke="#222"/><path d="M386 1623L399 1610" stroke="#f00" stroke-width="1.800"/>
<g transform="matrix(.967 0 0 .965 9.050 901.700)"><use href="#modes" transform="translate(0 -1)"/></g>
<rect x="411" y="1811" width="438" height="16" fill="#535353"/>
<rect x="415" y="1812" width="49" height="15" fill="#4a4a4a"/><rect x="465" y="1812" width="16" height="15" fill="#4d4d4d"/><rect x="486" y="1812" width="48" height="15" fill="#4a4a4a"/><rect x="535" y="1812" width="16" height="15" fill="#4d4d4d"/><rect x="593" y="1812" width="39" height="15" fill="#4a4a4a"/><rect x="633" y="1812" width="15" height="15" fill="#4d4d4d"/>
<text class="st" x="418" y="1825">139.79%</text><use href="#chev" x="472" y="1821"/><text class="st" x="489" y="1825">0°</text><use href="#chev" x="543" y="1821"/>
<use href="#ff" x="565" y="1820"/><use href="#pv" x="581" y="1820"/><text class="st" x="597" y="1825">22</text><use href="#chev" x="640" y="1821"/><use href="#nx" x="661" y="1820"/><use href="#ll" x="678" y="1820"/>
<text class="st" x="733" y="1825" style="font-size:10.600px">Toggle Direct Selection</text>
<use href="#chevu" x="840" y="1219"/><use href="#chevd" x="840" y="1803"/><rect x="834" y="1611" width="13" height="24" rx="6.500" fill="#656565"/>
<g fill="#414141"><rect x="851" y="1261" width="183" height="1.200"/><rect x="851" y="1355" width="183" height="1.200"/><rect x="851" y="1450" width="183" height="1.200"/><rect x="851" y="1490" width="183" height="1.200"/><rect x="851" y="1530" width="183" height="1.200"/><rect x="851" y="1570" width="183" height="1.200"/><rect x="851" y="1611" width="183" height="1.200"/><rect x="851" y="1650" width="183" height="1.200"/>
<rect x="1037" y="1233" width="126" height="1.200"/><rect x="1037" y="1328" width="126" height="1.200"/><rect x="1037" y="1423" width="126" height="1.200"/><rect x="1037" y="1463" width="126" height="1.200"/><rect x="1037" y="1557" width="126" height="1.200"/></g>
<g><use href="#grip" x="942" y="1199"/><use href="#grip" x="942" y="1266"/><use href="#grip" x="942" y="1361"/><use href="#grip" x="942" y="1455"/><use href="#grip" x="942" y="1495"/><use href="#grip" x="942" y="1535"/><use href="#grip" x="942" y="1575"/><use href="#grip" x="942" y="1615"/><use href="#grip" x="1099" y="1199"/><use href="#grip" x="1099" y="1239"/><use href="#grip" x="1099" y="1333"/><use href="#grip" x="1099" y="1428"/><use href="#grip" x="1099" y="1468"/></g>
<use href="#pal" x="869" y="1217"/><use href="#cgd" x="869" y="1245"/><use href="#swt" x="869" y="1285"/><use href="#brs" x="869" y="1312"/><use href="#clb" x="869" y="1339"/><use href="#stk" x="869" y="1379"/><use href="#grd" x="869" y="1406"/><use href="#trn" x="869" y="1434"/><use href="#gst" x="869" y="1474"/><use href="#pth" x="869" y="1514"/><use href="#alg" x="869" y="1554"/><use href="#lyr" x="869" y="1594"/><use href="#abd" x="869" y="1634"/>
<use href="#act" x="1057" y="1217"/><use href="#lnk" x="1056" y="1257"/><use href="#lib" x="1056" y="1285"/><use href="#doc" x="1056" y="1312"/><use href="#var" x="1056" y="1352"/><use href="#apr" x="1056" y="1379"/><use href="#exp" x="1056" y="1407"/><use href="#trf" x="1056" y="1447"/><use href="#chr" x="1056" y="1487"/><use href="#prg" x="1056" y="1514"/><use href="#opt" x="1056" y="1541"/>
<text class="q" x="887" y="1221">Color</text><text class="q" x="887" y="1249">Color Guide</text><text class="q" x="887" y="1289">Swatches</text><text class="q" x="887" y="1316">Brushes</text><text class="q" x="887" y="1343">Symbols</text><text class="q" x="887" y="1383">Stroke</text><text class="q" x="887" y="1410">Gradient</text><text class="q" x="887" y="1438">Transparency</text><text class="q" x="887" y="1478">Graphic Styles</text><text class="q" x="887" y="1518">Pathfinder</text><text class="q" x="887" y="1558">Align</text><text class="q" x="887" y="1598">Layers</text><text class="q" x="887" y="1638">Artboards</text>
<text class="q" x="1073" y="1221">Actions</text><text class="q" x="1073" y="1261">Links</text><text class="q" x="1073" y="1289">Libraries</text><text class="q" x="1073" y="1316">Document Info</text><text class="q" x="1073" y="1356">Variables</text><text class="q" x="1073" y="1383">Appearance</text><text class="q" x="1073" y="1411">Asset Export</text><text class="q" x="1073" y="1451">Transform</text><text class="q" x="1073" y="1491">Character</text><text class="q" x="1073" y="1518">Paragraph</text><text class="q" x="1073" y="1545">OpenType</text>
<g clip-path="url(#c2)">
<rect x="411" y="1211" width="421" height="600" fill="url(#bg2)"/>
<path d="M832 1340L832 1811L640 1811Z" fill="url(#bg2b)"/>
<path d="M640 1240L660 1248L527 1590L500 1590Z" fill="url(#wb)"/>
<use href="#M2" fill="url(#m2)"/>
<g clip-path="url(#cm)">
<path d="M780 1211L832 1211L832 1357L645 1811L610 1680Z" fill="url(#sal)"/>
<path d="M727 1211L765 1211L620 1560L575 1610Z" fill="#8a2030" fill-opacity=".22"/>
<path d="M727 1211L772 1211L630 1545L590 1570Z" fill="url(#sd)"/>
<rect x="411" y="1211" width="421" height="600" fill="url(#s2)" mask="url(#ms)"/>
<path d="M780 1211L832 1211L832 1357L645 1811L610 1680Z" fill="url(#sal)" opacity=".55"/>
<path d="M640 1500Q612 1600 575 1625Q550 1630 520 1600" fill="none" stroke="#3a1a70" stroke-opacity=".25" stroke-width="26"/>
<path d="M411 1500L500 1811L411 1811Z" fill="#2a2a90" fill-opacity=".25"/>
<path d="M411 1640L480 1811L411 1811Z" fill="url(#sd)"/>
<path d="M665 1811L790 1480" fill="none" stroke="#5a2070" stroke-opacity=".22" stroke-width="30"/>
</g>
<path d="M411 1693L458 1811L411 1811Z" fill="#0b1a70"/>
<path d="M411 1770L427 1811L411 1811Z" fill="#2f2f9f"/>
<path d="M545 1603L688 1240Q695 1224 712 1224L722 1224L577 1600Q568 1612 556 1612Q549 1612 545 1603Z" fill="#2f2f9f"/>
<path d="M702 1224L722 1224L577 1600Q568 1612 557 1612Z" fill="#0a1670"/>
<path d="M832 1313L772 1462" stroke="#fff" stroke-width="4.500" fill="none"/>
<path d="M757 1500L653 1750" stroke="#fff" stroke-opacity=".42" stroke-width="4.500" stroke-linecap="round" fill="none"/><path d="M770 1468L757 1500" stroke="#fff" stroke-opacity=".42" stroke-width="4.500" fill="none"/>
<circle cx="765" cy="1477" r="3.200" fill="#fff" fill-opacity=".8"/>
<path d="M643 1772L635 1793" stroke="#fff" stroke-opacity=".4" stroke-width="5" stroke-linecap="round"/>
<circle cx="630" cy="1806" r="3.200" fill="#fff" fill-opacity=".4"/>
<path d="M411 1287L415 1303" stroke="#fff" stroke-width="5.500" fill="none"/>
<path d="M415 1303L468 1450" stroke="#fff" stroke-opacity=".38" stroke-width="4.500" fill="none"/>
<path d="M478 1476L513 1573" stroke="#fff" stroke-opacity=".2" stroke-width="4.500" stroke-linecap="round" fill="none"/>
<circle cx="477" cy="1473" r="3.600" fill="#fff" fill-opacity=".35"/><circle cx="518" cy="1585" r="3" fill="#fff" fill-opacity=".2"/>
</g>
</g>
</svg>
</body></html>
